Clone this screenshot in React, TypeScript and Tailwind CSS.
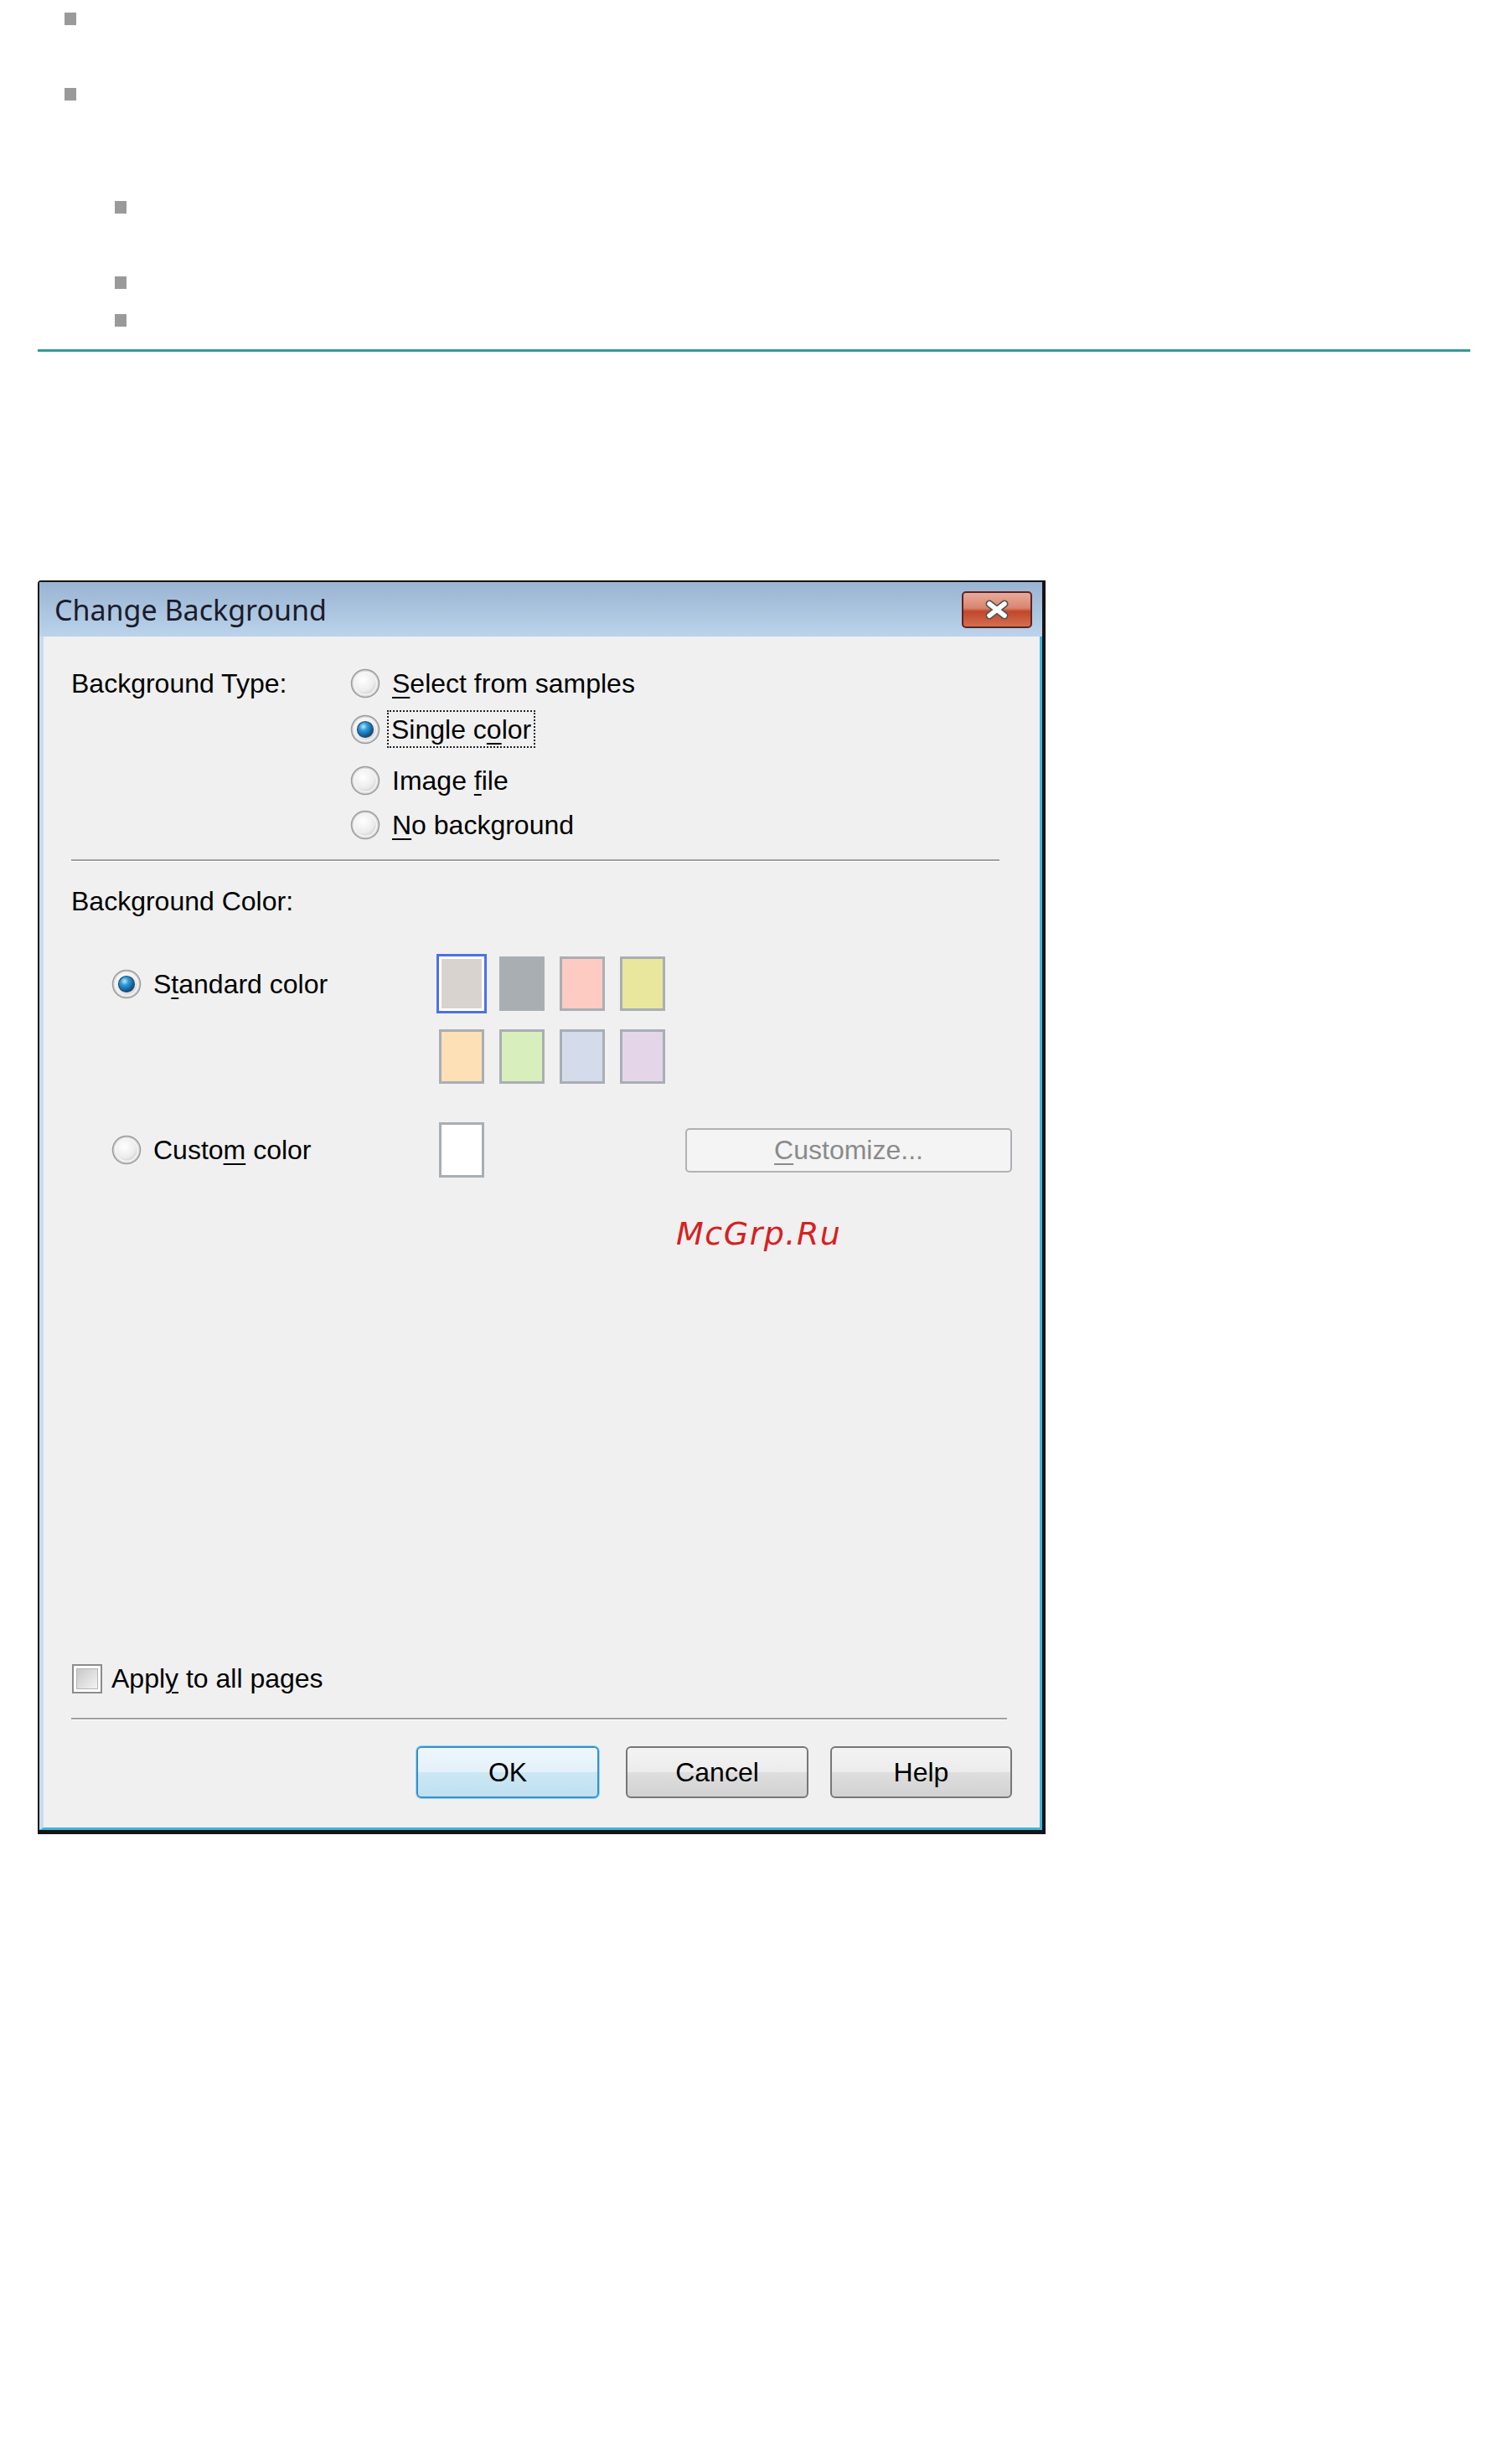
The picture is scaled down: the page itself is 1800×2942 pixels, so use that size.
import React from 'react';

const sans = "font-['Liberation_Sans',Arial,sans-serif] text-[32px] leading-[38px] text-black";

function Bullet({ className }: { className: string }) {
  return <span className={`block w-[14px] h-[15px] bg-[#9a9a9a] ${className}`} />;
}

// access key underline
function U({ children }: { children: React.ReactNode }) {
  return <span className="underline decoration-2 underline-offset-[5px]">{children}</span>;
}

function Radio({ checked }: { checked?: boolean }) {
  return (
    <svg width="36" height="36" viewBox="0 0 36 36" className="shrink-0">
      <defs>
        <radialGradient id="radio-face" cx="40%" cy="35%" r="70%">
          <stop offset="0%" stopColor="#ffffff" />
          <stop offset="70%" stopColor="#ececec" />
          <stop offset="100%" stopColor="#cfcfcf" />
        </radialGradient>
        <radialGradient id="radio-dot" cx="38%" cy="32%" r="70%">
          <stop offset="0%" stopColor="#b8ecff" />
          <stop offset="35%" stopColor="#2f9ddc" />
          <stop offset="100%" stopColor="#0a4577" />
        </radialGradient>
      </defs>
      <circle cx="18" cy="18" r="16.5" fill="#d9d9d9" stroke="#9c9c9c" strokeWidth="1.5" />
      <circle cx="18" cy="18" r="13.5" fill="url(#radio-face)" stroke="#f7f7f7" strokeWidth="1.5" />
      {checked && <circle cx="18" cy="18" r="9.5" fill="url(#radio-dot)" stroke="#27506f" strokeWidth="1.2" />}
    </svg>
  );
}

function Swatch({ color, selected }: { color: string; selected?: boolean }) {
  return (
    <div
      className={`w-[54px] h-[65px] border-[3px] ${
        selected ? 'border-white shadow-[0_0_0_3px_#4d70e4]' : 'border-[#a9aeb5]'
      }`}
      style={{ backgroundColor: color }}
    />
  );
}

function Separator({ w }: { w: string }) {
  return <div className={`${w} h-0 border-t-2 border-t-[#a0a0a0] border-b border-b-white`} />;
}

function WinButton({ children, w, primary }: { children: React.ReactNode; w: string; primary?: boolean }) {
  return (
    <div
      className={`${w} h-[62px] flex items-center justify-center rounded-[6px] border-2 ${
        primary
          ? 'border-[#3c8fc8] shadow-[0_0_0_1px_#8edaf6] bg-[linear-gradient(to_bottom,#edf6fc_0%,#e4f1fa_50%,#cce7f5_50%,#bfe0f0_100%)]'
          : 'border-[#777777] bg-[linear-gradient(to_bottom,#f3f3f3_0%,#ececec_50%,#dedede_50%,#d2d2d2_100%)]'
      }`}
    >
      {children}
    </div>
  );
}

function Dialog() {
  const row1 = ['#d8d3ce', '#a8aeb1', '#fecbc2', '#e8e79d'];
  const row2 = ['#fde0b6', '#d8eebd', '#d4dbea', '#e4d6e8'];

  return (
    <div className="mt-[273px] w-[1203px] border-t-2 border-l-2 border-r-4 border-b-[5px] border-[#141414] rounded-tl-[4px]">
      {/* TITLE BAR */}
      <div className="h-[65px] flex items-center justify-between pl-[18px] pr-[12px] bg-[linear-gradient(to_bottom,#99b4d2,#bbd3eb)]">
        <span className="font-['Noto_Sans',sans-serif] text-[34px] leading-[46px] text-[#1b1b2a]">Change Background</span>
        <div className="w-[84px] h-[44px] rounded-[5px] border-2 border-[#5e2424] flex items-center justify-center bg-[linear-gradient(to_bottom,#e8ab9b_0%,#d98570_45%,#c1462b_55%,#d2704f_100%)]">
          <svg width="34" height="24" viewBox="0 0 34 24">
            <path d="M8 5 L26 19 M26 5 L8 19" stroke="#545454" strokeWidth="9" strokeLinecap="round" />
            <path d="M8 5 L26 19 M26 5 L8 19" stroke="#ffffff" strokeWidth="5.5" strokeLinecap="round" />
          </svg>
        </div>
      </div>

      {/* BODY */}
      <div className={`bg-[#f0f0f0] border-l-[5px] border-l-[#c9dbef] border-r-[3px] border-r-[#3fb4dc] border-b-[3px] border-b-[#3fb4dc] px-[33px] pt-[37px] pb-[35px] ${sans}`}>
        {/* BACKGROUND TYPE */}
        <div className="flex">
          <div className="w-[333px] h-[38px] flex items-center">Background Type:</div>
          <div className="flex flex-col">
            <div className="h-[38px] flex items-center gap-[14px]">
              <Radio />
              <span><U>S</U>elect from samples</span>
            </div>
            <div className="mt-[13px] h-[45px] flex items-center gap-[14px]">
              <Radio checked />
              <span className="-ml-[6px] h-[45px] flex items-center px-[3px] border-2 border-dotted border-[#222]">
                Single c<U>o</U>lor
              </span>
            </div>
            <div className="mt-[20px] h-[38px] flex items-center gap-[14px]">
              <Radio />
              <span>Image <U>f</U>ile</span>
            </div>
            <div className="mt-[15px] h-[38px] flex items-center gap-[14px]">
              <Radio />
              <span><U>N</U>o background</span>
            </div>
          </div>
        </div>

        <div className="mt-[22px]">
          <Separator w="w-[1108px]" />
        </div>

        {/* BACKGROUND COLOR */}
        <div className="mt-[28px] h-[38px] flex items-center">Background Color:</div>

        <div className="mt-[47px] ml-[48px]">
          <div className="flex">
            <div className="w-[391px] h-[65px] flex items-center gap-[14px]">
              <Radio checked />
              <span>S<U>t</U>andard color</span>
            </div>
            <div className="flex gap-[18px]">
              {row1.map((c, i) => (
                <Swatch key={c} color={c} selected={i === 0} />
              ))}
            </div>
          </div>
          <div className="mt-[22px] ml-[391px] flex gap-[18px]">
            {row2.map((c) => (
              <Swatch key={c} color={c} />
            ))}
          </div>
          <div className="mt-[46px] flex items-center">
            <div className="w-[391px] flex items-center gap-[14px]">
              <Radio />
              <span>Custo<U>m</U> color</span>
            </div>
            <div className="w-[54px] h-[66px] border-[3px] border-[#a9aeb5] bg-white" />
            <div className="flex-1" />
            <div className="w-[390px] h-[53px] rounded-[5px] border-2 border-[#adb2b5] bg-[#f4f4f4] flex items-center justify-center text-[#8a8a8a]">
              <span><U>C</U>ustomize...</span>
            </div>
          </div>
        </div>

        {/* watermark */}
        <div className="mt-[45px] pl-[722px] h-[44px] font-['DejaVu_Sans',sans-serif] italic text-[38px] leading-[44px] tracking-[1.5px] text-[#d52121]">
          McGrp.Ru
        </div>

        {/* APPLY TO ALL */}
        <div className="mt-[490px] h-[38px] flex items-center">
          <div className="ml-[1px] w-[36px] h-[35px] border-2 border-[#8c8c8c] bg-white p-[3px]">
            <div className="w-full h-full border border-[#b4b4b4] bg-[linear-gradient(135deg,#c8c8c8,#f3f3f3)]" />
          </div>
          <span className="ml-[11px]">Appl<U>y</U> to all pages</span>
        </div>

        <div className="mt-[28px]">
          <Separator w="w-[1117px]" />
        </div>

        {/* BUTTONS */}
        <div className="mt-[31px] flex justify-end">
          <WinButton w="w-[218px]" primary>OK</WinButton>
          <div className="ml-[32px]">
            <WinButton w="w-[218px]">Cancel</WinButton>
          </div>
          <div className="ml-[26px]">
            <WinButton w="w-[217px]">Help</WinButton>
          </div>
        </div>
      </div>
    </div>
  );
}

export default function App() {
  return (
    <div className="min-h-[2942px] bg-white px-[45px]">
      <div className="flex flex-col">
        <Bullet className="mt-[15px] ml-[32px]" />
        <Bullet className="mt-[75px] ml-[32px]" />
        <Bullet className="mt-[120px] ml-[92px]" />
        <Bullet className="mt-[75px] ml-[92px]" />
        <Bullet className="mt-[30px] ml-[92px]" />
      </div>
      <div className="mt-[27px] h-[3px] bg-[#339999]" />
      <Dialog />
    </div>
  );
}
